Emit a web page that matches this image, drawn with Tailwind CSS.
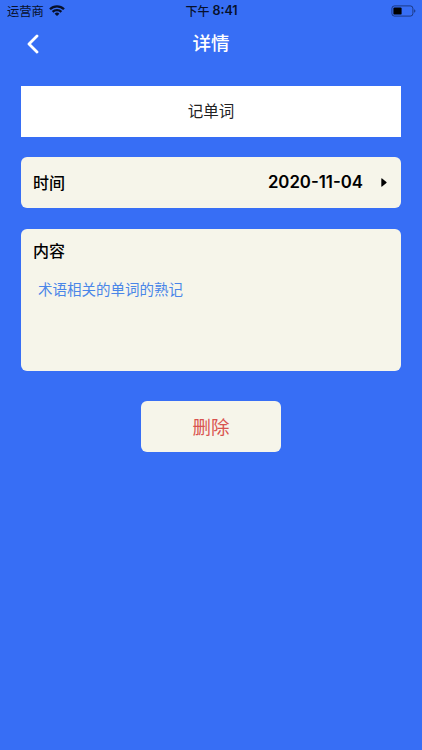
<!DOCTYPE html>
<html lang="zh-CN">
<head>
  <meta charset="UTF-8">
  <meta name="viewport" content="width=device-width, initial-scale=1.0">
  <title>详情</title>
  <script src="https://cdn.jsdelivr.net/npm/@tailwindcss/browser@4"></script>
  <style>
    body { font-family: 'Inter', 'Noto Sans CJK SC', sans-serif; }
  </style>
</head>
<body class="bg-[#376ef5] h-screen overflow-hidden text-black">
  <!-- Status bar -->
  <div class="grid grid-cols-3 items-center h-[22px] pl-[7px] pr-1.5 text-[#07102b]">
    <div class="flex items-center gap-[5px]">
      <span class="pt-0.5 text-[12.3px] leading-none">运营商</span>
      <svg class="w-4 h-[11px]" viewBox="0 0 16 11" fill="none" stroke="currentColor" stroke-width="2.3">
        <path d="M1 4.2a10 10 0 0 1 14 0" />
        <path d="M3.6 6.9a6.2 6.2 0 0 1 8.8 0" />
        <path d="M8 11 5.6 8.7a3.5 3.5 0 0 1 4.8 0z" fill="currentColor" stroke="none" />
      </svg>
    </div>
    <div class="flex items-center justify-center gap-[3px] pt-px text-[12px] leading-none whitespace-nowrap">
      <span class="font-medium">下午</span>
      <span class="font-semibold text-[12.5px]">8:41</span>
    </div>
    <svg class="justify-self-end w-[25px] h-3" viewBox="0 0 25 12">
      <rect x="0.9" y="0.9" width="21" height="10.2" rx="2.6" fill="none" stroke="#07102b" stroke-opacity="0.55" stroke-width="1" />
      <rect x="2.4" y="2.4" width="8.2" height="7.2" rx="1.2" fill="#000" />
      <path d="M23.2 4.2v3.6c1.6-.7 1.6-2.9 0-3.6z" fill="#07102b" fill-opacity="0.6" />
    </svg>
  </div>

  <!-- Nav bar -->
  <div class="grid grid-cols-3 items-center h-[43px] pl-[27px] pr-[27px] text-white">
    <svg class="w-3 h-5" viewBox="0 0 12 20" fill="none" stroke="currentColor" stroke-width="2.8" stroke-linecap="round" stroke-linejoin="round">
      <path d="M10 1.9 2 10l8 8.1" />
    </svg>
    <h1 class="text-center text-[18.5px] leading-none font-medium">详情</h1>
  </div>

  <main class="flex flex-col px-[21px] pt-[21px]">
    <div class="flex items-center justify-center h-[51px] pt-px bg-white text-[15.5px] text-[#222]">记单词</div>

    <div class="flex items-center h-[51px] mt-5 pl-3 pr-3.5 rounded-md bg-[#f6f5ea]">
      <span class="text-[16px] font-medium">时间</span>
      <span class="ml-auto pt-px text-[16.8px] font-semibold">2020-11-04</span>
      <svg class="ml-[18px] w-[6px] h-[9px]" viewBox="0 0 6 9"><path d="M.3.9Q.3 0 1.1.5L5.4 3.9Q6 4.5 5.4 5.1L1.1 8.5Q.3 9 .3 8.1z" /></svg>
    </div>

    <div class="h-[142.5px] mt-[20.5px] pl-3 pt-[10.5px] rounded-md bg-[#f6f5ea]">
      <h2 class="text-[16px] leading-6 font-medium">内容</h2>
      <p class="mt-[15.5px] pl-[5px] text-[14.5px] leading-[22px] text-[#4a86e8]">术语相关的单词的熟记</p>
    </div>

    <button class="self-center w-[140.5px] h-[51px] mt-[30.4px] pt-0.5 rounded-md bg-[#f6f5ea] text-[18.5px] text-[#d9534f]">删除</button>
  </main>
</body>
</html>
